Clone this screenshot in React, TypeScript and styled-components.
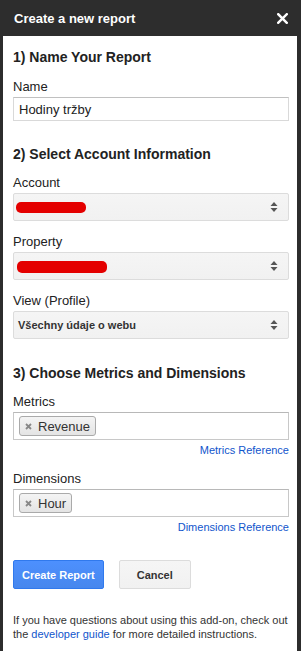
import React from "react";
import styled, { createGlobalStyle } from "styled-components";

const Global = createGlobalStyle`
  html, body { margin: 0; padding: 0; background: #fff; }
  * { box-sizing: border-box; }
  body { font-family: "Liberation Sans", Arial, sans-serif; color: #222; }
`;

const Frame = styled.div`
  width: 301px;
  height: 651px;
  display: flex;
  flex-direction: column;
  background: #2d2d2d;
  overflow: hidden;
`;

const TitleBar = styled.div`
  height: 36px;
  flex: none;
  display: flex;
  align-items: center;
  justify-content: space-between;
  padding: 0 13px 0 14px;
  color: #fff;
`;

const Title = styled.div`
  font-weight: bold;
  font-size: 13px;
  line-height: 16px;
  padding-top: 1px;
`;

const CloseBtn = styled.button`
  border: 0;
  background: transparent;
  padding: 0;
  width: 11px;
  height: 11px;
  display: flex;
  align-items: center;
  justify-content: center;
  margin-top: 1px;
`;

const Body = styled.div`
  flex: 1;
  margin: 0 4px 0 3px;
  background: #fff;
  padding: 12px 8px 0 10px;
  display: flex;
  flex-direction: column;
`;

const Heading = styled.h2<{ $gap: number }>`
  margin: ${(p) => p.$gap}px 0 0;
  font-size: 14px;
  line-height: 18px;
  font-weight: bold;
  color: #222;
`;

const Label = styled.label<{ $gap: number }>`
  display: block;
  margin: ${(p) => p.$gap}px 0 2px;
  font-size: 13px;
  line-height: 16px;
  color: #222;
`;

const TextInput = styled.div`
  height: 24px;
  border: 1px solid #d9d9d9;
  border-top-color: #c0c0c0;
  padding: 0 5px;
  display: flex;
  align-items: center;
  font-size: 13px;
  color: #222;
`;

const SelectBox = styled.div`
  height: 28px;
  border: 1px solid #dcdcdc;
  border-radius: 2px;
  background: linear-gradient(#f5f5f5, #f1f1f1);
  display: flex;
  align-items: center;
  padding: 0 10px 0 3px;
`;

const SelectText = styled.span`
  flex: 1;
  font-size: 11px;
  font-weight: bold;
  color: #333;
  padding-left: 1px;
`;

const Redaction = styled.span<{ $w: number; $h: number; $x: number }>`
  display: block;
  width: ${(p) => p.$w}px;
  height: ${(p) => p.$h}px;
  margin-left: ${(p) => p.$x}px;
  margin-top: 1px;
  border-radius: 5px;
  background: #e40000;
`;

const Spacer = styled.span`
  flex: 1;
`;

const TokenBox = styled.div`
  height: 28px;
  border: 1px solid #c8c8c8;
  border-top-color: #b8b8b8;
  padding: 3px 5px;
  display: flex;
  align-items: center;
`;

const Chip = styled.span`
  height: 20px;
  display: inline-flex;
  align-items: center;
  gap: 6px;
  padding: 0 5px 0 5px;
  border: 1px solid #aaa;
  border-radius: 3px;
  background: linear-gradient(#f4f4f4, #e4e4e4);
  font-size: 13px;
  color: #333;
`;

const RefLink = styled.a`
  align-self: flex-end;
  margin-top: 3px;
  font-size: 11px;
  line-height: 14px;
  color: #15c;
  text-decoration: none;
`;

const ButtonRow = styled.div`
  display: flex;
  gap: 15px;
  margin-top: 26px;
`;

const Button = styled.button<{ $primary?: boolean }>`
  height: 29px;
  min-width: 72px;
  padding: 0 8px;
  border-radius: 2px;
  font-family: "Liberation Sans", Arial, sans-serif;
  font-size: 11px;
  font-weight: bold;
  border: 1px solid ${(p) => (p.$primary ? "#3079ed" : "#dcdcdc")};
  background: ${(p) =>
    p.$primary ? "linear-gradient(#4d90fe, #4787ed)" : "linear-gradient(#f5f5f5, #f1f1f1)"};
  color: ${(p) => (p.$primary ? "#fff" : "#333")};
`;

const Footer = styled.p`
  margin: 24px 0 0;
  font-size: 11px;
  line-height: 14px;
  color: #333;
`;

const FooterLink = styled.a`
  color: #15c;
  text-decoration: none;
`;

const ArrowIcon = () => (
  <svg width="8" height="12" viewBox="0 0 8 12">
    <path d="M0.5 5 L4 1 L7.5 5 Z" fill="#555" />
    <path d="M0.5 7 L4 11 L7.5 7 Z" fill="#555" />
  </svg>
);

const XIcon = () => (
  <svg width="11" height="11" viewBox="0 0 11 11">
    <path d="M1.2 1.2 L9.8 9.8 M9.8 1.2 L1.2 9.8" stroke="#fff" strokeWidth="2.4" strokeLinecap="square" />
  </svg>
);

const ChipX = () => (
  <svg width="7" height="7" viewBox="0 0 7 7">
    <path d="M1 1 L6 6 M6 1 L1 6" stroke="#888" strokeWidth="1.8" />
  </svg>
);

export default function App() {
  return (
    <>
      <Global />
      <Frame>
        <TitleBar>
          <Title>Create a new report</Title>
          <CloseBtn aria-label="Close">
            <XIcon />
          </CloseBtn>
        </TitleBar>
        <Body>
          <Heading $gap={0}>1) Name Your Report</Heading>
          <Label $gap={13}>Name</Label>
          <TextInput>Hodiny tržby</TextInput>

          <Heading $gap={24}>2) Select Account Information</Heading>
          <Label $gap={12}>Account</Label>
          <SelectBox>
            <Redaction $w={70} $h={11} $x={-1} />
            <Spacer />
            <ArrowIcon />
          </SelectBox>
          <Label $gap={13}>Property</Label>
          <SelectBox>
            <Redaction $w={90} $h={12} $x={0} />
            <Spacer />
            <ArrowIcon />
          </SelectBox>
          <Label $gap={13}>View (Profile)</Label>
          <SelectBox>
            <SelectText>Všechny údaje o webu</SelectText>
            <ArrowIcon />
          </SelectBox>

          <Heading $gap={25}>3) Choose Metrics and Dimensions</Heading>
          <Label $gap={12}>Metrics</Label>
          <TokenBox>
            <Chip>
              <ChipX />
              Revenue
            </Chip>
          </TokenBox>
          <RefLink href="#">Metrics Reference</RefLink>
          <Label $gap={14}>Dimensions</Label>
          <TokenBox>
            <Chip>
              <ChipX />
              Hour
            </Chip>
          </TokenBox>
          <RefLink href="#">Dimensions Reference</RefLink>

          <ButtonRow>
            <Button $primary>Create Report</Button>
            <Button>Cancel</Button>
          </ButtonRow>

          <Footer>
            If you have questions about using this add-on, check out the{" "}
            <FooterLink href="#">developer guide</FooterLink> for more detailed instructions.
          </Footer>
        </Body>
      </Frame>
    </>
  );
}
